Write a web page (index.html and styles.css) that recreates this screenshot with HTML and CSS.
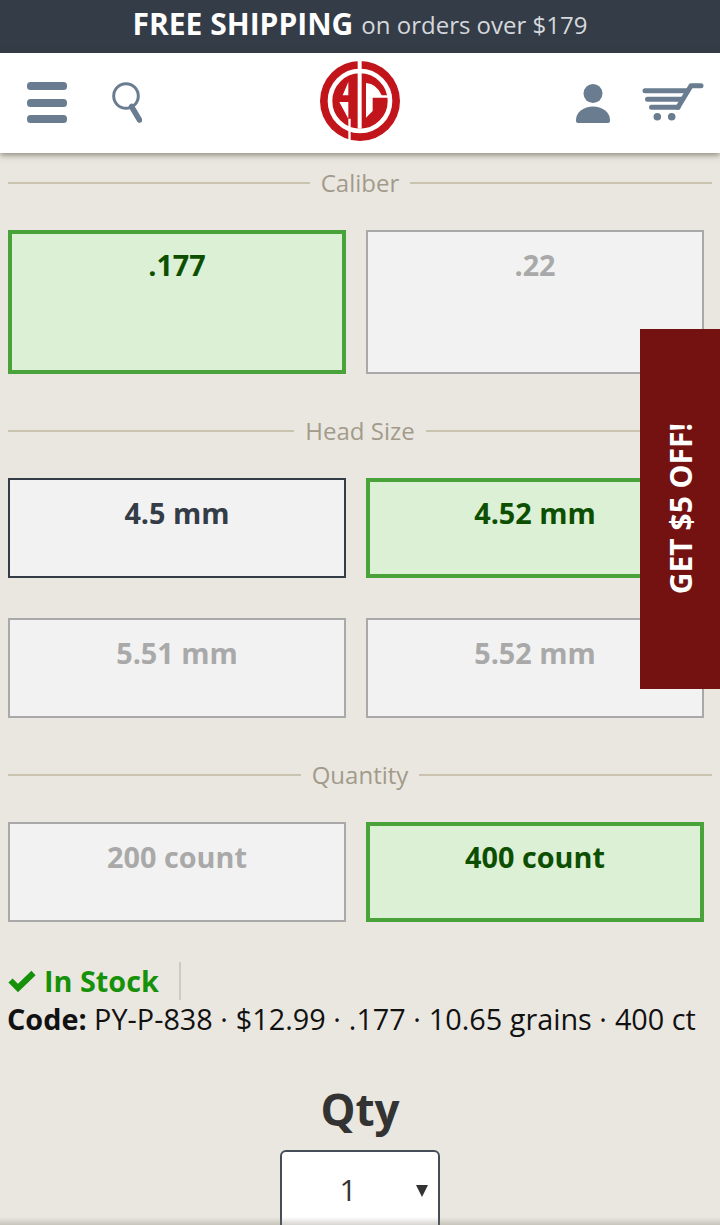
FILE: index.html
```html
<!DOCTYPE html>
<html lang="en">
<head>
<meta charset="utf-8">
<title>Product options</title>
<link rel="stylesheet" href="styles.css">
</head>
<body>
<div class="promo"><strong>FREE SHIPPING</strong> <span>on orders over $179</span></div>
<header class="header">
  <div class="header-left">
    <svg class="icon-menu" width="40" height="42" viewBox="0 0 40 42"><rect y="0" width="40" height="8" rx="3.5"/><rect y="17" width="40" height="8" rx="3.5"/><rect y="33" width="40" height="8" rx="3.5"/></svg>
    <svg class="icon-search" width="32" height="42" viewBox="0 0 32 42" fill="none"><circle cx="16" cy="14" r="12.3" stroke-width="3"/><path d="M21.500 24.500 L29.500 38" stroke-width="5.500" stroke-linecap="round"/></svg>
  </div>
  <svg class="logo" width="80" height="80" viewBox="0 0 240 240">
    <circle cx="120" cy="120" r="120" fill="#c1141b"/>
    <circle cx="120" cy="120" r="90" fill="none" stroke="#fff" stroke-width="14"/>
    <path d="M113 0 H125 V203 H113 Z M85 173 H92 V240 H85 Z" fill="#fff"/>
    <path d="M85 63 V103 H68 Z M58 123 H85 V173 Z" fill="#fff"/>
    <path d="M138 66 Q170 68 185 103 H205 V110 H158 V150 L138 170 Z" fill="#fff"/>
  </svg>
  <div class="header-right">
    <svg class="icon-user" width="34" height="39" viewBox="0 0 34 39"><circle cx="17" cy="9.500" r="9.500"/><path d="M0 36 C0 28 8 22.500 17 22.500 C26 22.500 34 28 34 36 V37 Q34 39 32 39 H2 Q0 39 0 37 Z"/></svg>
    <svg class="icon-cart" width="62" height="40" viewBox="0 0 62 40" fill="none"><path d="M3 7.700 H45 M5.500 16.300 H40 M9.500 24.300 H36" stroke-width="5" stroke-linecap="round"/><path d="M36 24.300 L49 2.800 H59" stroke-width="5" stroke-linecap="round" stroke-linejoin="round"/><circle class="wheel" cx="15.300" cy="33.700" r="3.800"/><circle class="wheel" cx="29.700" cy="33.700" r="3.800"/></svg>
  </div>
</header>
<main class="content">
  <div class="divider"><span>Caliber</span></div>
  <div class="tiles tall">
    <div class="tile selected">.177</div>
    <div class="tile off">.22</div>
  </div>
  <div class="divider"><span>Head Size</span></div>
  <div class="tiles">
    <div class="tile">4.5 mm</div>
    <div class="tile selected">4.52 mm</div>
    <div class="tile off">5.51 mm</div>
    <div class="tile off">5.52 mm</div>
  </div>
  <div class="divider"><span>Quantity</span></div>
  <div class="tiles">
    <div class="tile off">200 count</div>
    <div class="tile selected">400 count</div>
  </div>
  <div class="stock">
    <div class="stock-line"><svg class="check" width="28" height="22" viewBox="0 0 28 22" fill="none"><path d="M2.500 10.500 L10 18 L25.500 3" stroke-width="6"/></svg><span>In Stock</span></div>
  </div>
  <p class="code"><strong>Code:</strong> PY-P-838 <i>·</i>$12.99 <i>·</i>.177 <i>·</i>10.65 grains <i>·</i>400 ct</p>
  <div class="qty">
    <h2>Qty</h2>
    <div class="select"><span>1</span><b></b></div>
  </div>
</main>
<aside class="side-tab"><span>GET $5 OFF!</span></aside>
<div class="bottom-fade"></div>
</body>
</html>
```
FILE: styles.css
```css
* { box-sizing: border-box; }
html, body { margin: 0; height: 1225px; overflow: hidden; }
body { background: #eae7e0; font-family: "Open Sans", sans-serif; color: #333; position: relative; }
.promo { height: 53px; background: #343c47; color: #d5d8dc; display: flex; justify-content: center; align-items: center; gap: 8px; font-size: 24px; padding-bottom: 6px; }
.promo strong { color: #fff; font-size: 30px; font-weight: 700; }
.promo span { position: relative; top: 1px; }
.header { height: 100px; background: #fff; display: flex; align-items: center; padding: 0 16px 0 27px; box-shadow: 0 2px 6px rgba(60, 55, 40, .55); position: relative; }
.header-left { display: flex; align-items: center; gap: 43px; width: 293px; }
.header-right { display: flex; align-items: center; gap: 32px; width: 304px; justify-content: flex-end; }
.logo { margin-bottom: 5px; }
.icon-menu, .icon-user { fill: #6a7d90; }
.icon-search, .icon-cart { stroke: #6a7d90; }
.wheel { fill: #6a7d90; stroke: none; }
.content { padding: 13px 8px 0; }
.divider { display: flex; align-items: center; gap: 11px; height: 34px; color: #a29b8b; font-size: 24px; }
.divider span { margin-top: -2px; }
.divider::before, .divider::after { content: ""; flex: 1; height: 2px; background: #c9c3b0; }
.tiles { display: grid; grid-template-columns: 338px 338px; column-gap: 20px; row-gap: 40px; margin: 30px 0 40px; }
.tile { height: 100px; border: 2px solid #343c47; background: #f2f2f2; text-align: center; font-size: 28.8px; font-weight: 700; padding-top: 13px; line-height: 40px; color: #343c47; }
.tall .tile { height: 144px; padding-top: 13px; }
.tile.selected { background: #dcf0d6; border: 4px solid #4aa33a; color: #0d4f00; padding-top: 11px; }
.tall .tile.selected { padding-top: 11px; }
.tile.off { border-color: #a9a9a9; color: #a9a9a9; }
.stock { height: 38px; display: flex; align-items: flex-end; }
.stock-line { display: flex; align-items: center; gap: 8px; height: 38px; padding-right: 20px; border-right: 2px solid #cfcbc1; color: #169109; font-size: 28.8px; font-weight: 700; line-height: 38px; }
.check { stroke: #169109; }
.code { margin: 0 0 0 -1px; font-size: 28.8px; line-height: 38px; color: #111; white-space: nowrap; }
.code i { font-style: normal; margin: 0 8px 0 0; }
.qty { display: flex; flex-direction: column; align-items: center; margin-top: 41px; }
.qty h2 { margin: 0; font-size: 44px; line-height: 60px; font-weight: 700; color: #333; }
.select { width: 160px; height: 90px; margin-top: 11px; background: #fff; border: 2px solid #454e58; border-radius: 6px 6px 0 0; position: relative; display: flex; justify-content: center; padding-top: 18px; font-size: 30px; line-height: 40px; }
.select span { position: relative; left: -12px; }
.select b { position: absolute; right: 10px; top: 33px; width: 0; height: 0; border-left: 6px solid transparent; border-right: 6px solid transparent; border-top: 12px solid #333; }
.side-tab { position: absolute; left: 640px; top: 329px; width: 80px; height: 360px; background: #741212; color: #fff; display: flex; align-items: center; justify-content: center; font-size: 30px; font-weight: 700; }
.side-tab span { writing-mode: vertical-rl; transform: rotate(180deg); }
.bottom-fade { position: absolute; left: 0; right: 0; bottom: 0; height: 8px; background: linear-gradient(to bottom, rgba(120, 115, 100, 0), rgba(120, 115, 100, .3)); }
```
